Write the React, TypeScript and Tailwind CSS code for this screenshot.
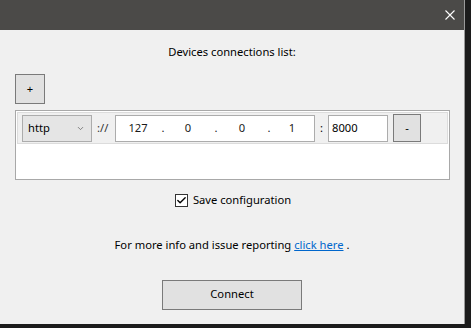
import { Check, ChevronDown } from "lucide-react";

const font = { fontFamily: '"Noto Sans", "Liberation Sans", sans-serif' };

export default function App() {
  return (
    <div className="flex h-[328px] w-[471px] bg-[#1c1c1c] text-[11.2px] text-black" style={font}>
      <div className="flex h-[324px] w-[465px] flex-col border-r border-[#9a9a9a] bg-[#f0f0f0]">
        {/* Title bar */}
        <div className="flex h-[30px] shrink-0 items-center justify-end bg-[#4b4a48] pr-[9px]">
          <svg width="10" height="10" viewBox="0 0 10 10" className="mt-[-1px]">
            <path d="M0.5 0.5 L9.5 9.5 M9.5 0.5 L0.5 9.5" stroke="white" strokeWidth="1.1" />
          </svg>
        </div>

        <div className="flex flex-col px-[15px]">
          <p className="mt-[13px] h-[18px] text-center leading-[18px]">Devices connections list:</p>

          <button className="mt-[13px] flex h-[30px] w-[30px] items-center justify-center border border-[#7a7a7a] bg-[#e1e1e1] leading-none">
            +
          </button>

          {/* Connections list */}
          <div className="mt-[6px] flex h-[70px] w-[435px] flex-col border border-[#a8a8a8] bg-white p-px">
            <div className="flex h-[32px] items-center border border-[#dcdcdc] bg-[#f0f0f0] pl-[4px]">
              <div className="flex h-[27px] w-[70px] items-center justify-between border border-[#acacac] bg-[#e5e5e5] pl-[5px] pr-[6px]">
                <span>http</span>
                <ChevronDown className="h-[9px] w-[9px] text-[#606060]" strokeWidth={2} />
              </div>
              <span className="ml-[5px] w-[14px] text-[#333]">://</span>
              <div className="ml-[4px] flex h-[27px] w-[200px] items-center border border-[#acacac] bg-white pl-[10px] text-[#1a1a1a]">
                <span className="w-[24px] text-center">127</span>
                <span className="w-[26px] text-center">.</span>
                <span className="w-[24px] text-center">0</span>
                <span className="w-[32px] text-center">.</span>
                <span className="w-[20px] text-center">0</span>
                <span className="w-[34px] text-center">.</span>
                <span className="w-[12px] text-center">1</span>
              </div>
              <span className="w-[13px] text-center">:</span>
              <div className="flex h-[27px] w-[60px] items-center border border-[#acacac] bg-white pl-[3px]">8000</div>
              <button className="ml-[5px] flex h-[28px] w-[28px] items-center justify-center border border-[#7a7a7a] bg-[#e1e1e1] leading-none">
                -
              </button>
            </div>
          </div>

          {/* Save configuration */}
          <label className="mt-[12px] flex items-center justify-center gap-[5px] pl-[2px]">
            <span className="flex h-[13px] w-[13px] items-center justify-center border border-[#333] bg-white">
              <Check className="h-[11px] w-[11px]" strokeWidth={3} />
            </span>
            <span>Save configuration</span>
          </label>

          <p className="mt-[28px] text-center">
            For more info and issue reporting{" "}
            <a className="text-[#0066cc] underline">click here</a> .
          </p>

          <div className="mt-[26px] flex justify-center">
            <button className="h-[30px] w-[140px] border border-[#7a7a7a] bg-[#e1e1e1]">
              Connect
            </button>
          </div>
        </div>
      </div>
    </div>
  );
}
